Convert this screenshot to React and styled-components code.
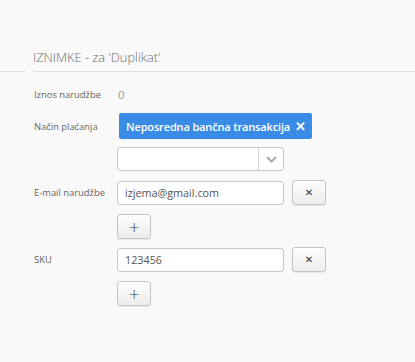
import styled, { createGlobalStyle } from 'styled-components';

const Global = createGlobalStyle`
    html, body {
        margin: 0;
        padding: 0;
        background: #f9f9f9;
        font-family: 'Open Sans', 'Noto Sans', sans-serif;
    }
`

const Page = styled.div`
    width: 415px;
    height: 362px;
    padding-top: 47px;
    box-sizing: border-box;
    background: #f9f9f9;
    overflow: hidden;
`

const HeaderRow = styled.div`
    display: flex;
    align-items: flex-end;
    gap: 8px;
    .stub {
        width: 25px;
        border-bottom: 1px solid #dedede;
    }
    h3 {
        flex: 1;
        margin: 0;
        padding-bottom: 4px;
        font-size: 12.8px;
        font-weight: 300;
        color: #6f6f6f;
        line-height: 20px;
        border-bottom: 1px solid #dedede;
    }
`

const Form = styled.div`
    padding: 14px 0 0 33px;
`

const Row = styled.div`
    display: grid;
    grid-template-columns: 84px auto;
    align-items: center;
    margin-bottom: ${p => p.gap || 9}px;
    min-height: ${p => p.h || 24}px;
`

const Label = styled.span`
    font-size: 9.4px;
    color: #666;
    padding-left: 1px;
`

const Value = styled.span`
    font-size: 11.5px;
    color: #9a9a9a;
    padding-left: 1px;
`

const Tag = styled.div`
    justify-self: start;
    margin-left: 2px;
    display: flex;
    align-items: center;
    gap: 5px;
    height: 26px;
    padding: 0 6px 0 7px;
    background: #3a8be6;
    border-radius: 2px;
    color: #fff;
    font-size: 11px;
    font-weight: 600;
    letter-spacing: -0.15px;
    span.x {
        font-size: 13px;
        font-weight: 700;
        line-height: 1;
    }
`

const Select = styled.div`
    width: 167px;
    height: 24px;
    box-sizing: border-box;
    display: flex;
    background: #fff;
    border: 1px solid #c9c9c9;
    border-radius: 3px;
    .field { flex: 1; }
    .arrow {
        width: 24px;
        border-left: 1px solid #d8d8d8;
        display: flex;
        align-items: center;
        justify-content: center;
    }
`

const Controls = styled.div`
    display: flex;
    align-items: center;
    gap: 8px;
`

const Input = styled.div`
    width: 167px;
    height: 24px;
    box-sizing: border-box;
    display: flex;
    align-items: center;
    padding: 0 7px;
    background: #fff;
    border: 1px solid #c9c9c9;
    border-radius: 3px;
    font-size: 10.8px;
    color: #555;
`

const Button = styled.button`
    width: 34px;
    height: 25px;
    padding: 0;
    box-sizing: border-box;
    display: flex;
    align-items: center;
    justify-content: center;
    background: linear-gradient(#fdfdfd, #ececec);
    border: 1px solid #c4c4c4;
    border-radius: 3px;
    box-shadow: 0 1px 1px rgba(0,0,0,.08);
    color: #333;
    font-family: 'DejaVu Sans', sans-serif;
    font-size: ${p => p.big ? 14 : 10}px;
    font-weight: ${p => p.big ? 300 : 700};
`

const Chevron = () => (
    <svg width="11" height="7" viewBox="0 0 11 7">
        <path d="M1 1 L5.5 5.5 L10 1" fill="none" stroke="#aaa" strokeWidth="2" />
    </svg>
)

const App = () => {
    return (
        <Page>
            <Global />
            <HeaderRow>
                <div className="stub" />
                <h3>IZNIMKE - za 'Duplikat'</h3>
            </HeaderRow>
            <Form>
                <Row h={16} gap={11}>
                    <Label>Iznos narudžbe</Label>
                    <Value>0</Value>
                </Row>
                <Row h={26} gap={8}>
                    <Label>Način plaćanja</Label>
                    <Tag>Neposredna bančna transakcija <span className="x">✕</span></Tag>
                </Row>
                <Row>
                    <span />
                    <Select>
                        <div className="field" />
                        <div className="arrow"><Chevron /></div>
                    </Select>
                </Row>
                <Row>
                    <Label>E-mail narudžbe</Label>
                    <Controls>
                        <Input>izjema@gmail.com</Input>
                        <Button>✕</Button>
                    </Controls>
                </Row>
                <Row gap={8}>
                    <span />
                    <Controls><Button big>+</Button></Controls>
                </Row>
                <Row>
                    <Label>SKU</Label>
                    <Controls>
                        <Input>123456</Input>
                        <Button>✕</Button>
                    </Controls>
                </Row>
                <Row>
                    <span />
                    <Controls><Button big>+</Button></Controls>
                </Row>
            </Form>
        </Page>
    )
}

export default App;
